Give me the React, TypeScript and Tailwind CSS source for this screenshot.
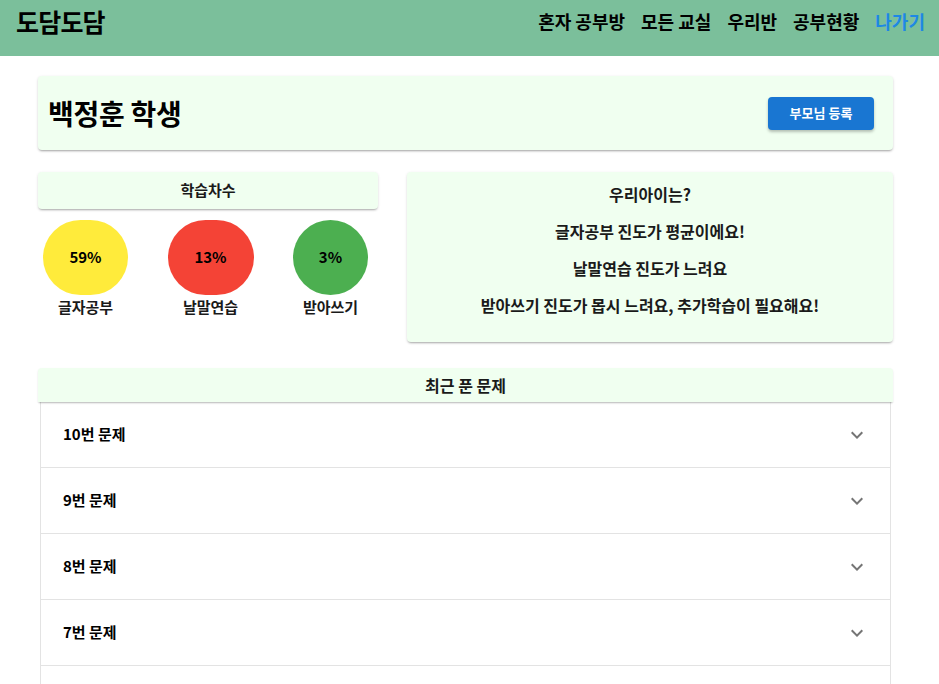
import React from "react";

const FONT = { fontFamily: '"Noto Sans CJK KR", "Noto Sans", sans-serif' };

const NAV = ["혼자 공부방", "모든 교실", "우리반", "공부현황"];

const PROGRESS = [
  { label: "글자공부", value: "59%", color: "bg-[#ffeb3b]", w: "w-[85px]" },
  { label: "날말연습", value: "13%", color: "bg-[#f44336]", w: "w-[86px]" },
  { label: "받아쓰기", value: "3%", color: "bg-[#4caf50]", w: "w-[75px]" },
];

const MESSAGES = [
  "우리아이는?",
  "글자공부 진도가 평균이에요!",
  "날말연습 진도가 느려요",
  "받아쓰기 진도가 몹시 느려요, 추가학습이 필요해요!",
];

const PROBLEMS = ["10번 문제", "9번 문제", "8번 문제", "7번 문제", "6번 문제"];

function ExpandMore() {
  return (
    <svg width="24" height="24" viewBox="0 0 24 24" className="fill-[#757575]">
      <path d="M16.59 8.59 12 13.17 7.41 8.59 6 10l6 6 6-6z" />
    </svg>
  );
}

export default function App() {
  return (
    <div style={FONT} className="min-h-screen bg-white text-[#1a1a1a]">
      {/* top bar */}
      <header className="flex h-[56px] items-start justify-between bg-[#7bbf9b] pl-4 pr-[14px] pt-[6px]">
        <div className="text-[25px] font-bold leading-[30px] tracking-[-0.8px] text-black">도담도담</div>
        <nav className="flex items-center gap-[16px] pt-[2px] text-[18px] font-bold leading-[26px] text-black">
          {NAV.map((n) => (
            <span key={n}>{n}</span>
          ))}
          <span className="text-[#1e88e5]">나가기</span>
        </nav>
      </header>

      <main className="pl-[38px] pr-[46px] pt-[20px]">
        {/* student card */}
        <section className="flex h-[74px] items-center justify-between rounded-[4px] bg-[#f0fff0] pl-[10px] pr-[19px] shadow-[0_2px_2px_-1px_rgba(0,0,0,0.25),0_1px_3px_0_rgba(0,0,0,0.15)]">
          <h1 className="text-[28px] font-bold tracking-[-0.3px] text-black">백정훈 학생</h1>
          <button className="h-[33px] w-[106px] rounded-[4px] bg-[#1976d2] text-[13px] font-bold text-white shadow-[0_2px_3px_rgba(0,0,0,0.25)]">
            부모님 등록
          </button>
        </section>

        {/* progress + summary */}
        <div className="mt-[22px] flex gap-[29px]">
          <div className="w-[340px]">
            <div className="flex h-[37px] items-center justify-center rounded-[4px] bg-[#f0fff0] text-[15px] font-bold shadow-[0_2px_2px_-1px_rgba(0,0,0,0.25),0_1px_3px_0_rgba(0,0,0,0.12)]">
              학습차수
            </div>
            <div className="mt-[11px] flex justify-between pl-[5px] pr-[10px]">
              {PROGRESS.map((p) => (
                <div key={p.label} className="flex flex-col items-center">
                  <div
                    className={`flex h-[75px] items-center justify-center rounded-full ${p.color} ${p.w} text-[15px] font-bold text-black`}
                  >
                    {p.value}
                  </div>
                  <div className="mt-[1px] text-[15px] font-bold leading-[22px]">{p.label}</div>
                </div>
              ))}
            </div>
          </div>

          <div className="flex h-[170px] flex-1 flex-col items-center gap-[15px] rounded-[4px] bg-[#f0fff0] pt-[11px] text-[16px] font-bold leading-[22px] shadow-[0_2px_2px_-1px_rgba(0,0,0,0.25),0_1px_3px_0_rgba(0,0,0,0.12)]">
            {MESSAGES.map((m) => (
              <p key={m}>{m}</p>
            ))}
          </div>
        </div>

        {/* recent problems */}
        <section className="mt-[26px]">
          <div className="relative z-10 flex h-[34px] items-center justify-center rounded-t-[4px] bg-[#f0fff0] text-[16px] font-bold shadow-[0_2px_2px_-1px_rgba(0,0,0,0.2),0_1px_2px_0_rgba(0,0,0,0.1)]">
            최근 푼 문제
          </div>
          <div className="mx-[2px] border-x border-[#e3e3e3]">
            {PROBLEMS.map((p) => (
              <div key={p} className="flex h-[66px] items-center justify-between border-b border-[#e3e3e3] pl-[22px] pr-[21px]">
                <span className="text-[15px] font-bold text-black">{p}</span>
                <ExpandMore />
              </div>
            ))}
          </div>
        </section>
      </main>
    </div>
  );
}
